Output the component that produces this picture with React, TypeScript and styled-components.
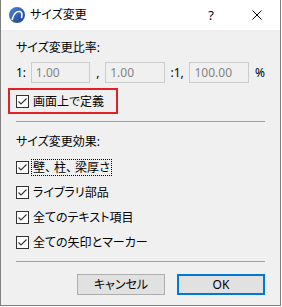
import React from "react";
import styled, { createGlobalStyle } from "styled-components";

const Global = createGlobalStyle`
  html, body { margin: 0; padding: 0; background: #ffffff; }
  body {
    font-family: "Noto Sans", "Noto Sans CJK JP", sans-serif;
    font-size: 12px;
    color: #000;
  }
`;

const Window = styled.div`
  width: 281px;
  height: 306px;
  box-sizing: border-box;
  border: 1px solid #7f7f7f;
  border-top: none;
  background: #f0f0f0;
  display: flex;
  flex-direction: column;
  font-feature-settings: "palt";
`;

const TitleBar = styled.div`
  height: 30px;
  background: #ffffff;
  display: flex;
  align-items: center;
  flex-shrink: 0;
`;

const AppIcon = styled.svg`
  margin-left: 8px;
  width: 16px;
  height: 16px;
`;

const Title = styled.span`
  margin-left: 5px;
  font-size: 12px;
  flex: 1;
  line-height: 16px;
`;

const TitleButton = styled.div`
  width: 46px;
  height: 30px;
  display: flex;
  align-items: center;
  justify-content: center;
  font-size: 13px;
  color: #000;
`;

const Body = styled.div`
  padding: 0 15px 10px 15px;
  display: flex;
  flex-direction: column;
  flex: 1;
`;

const GroupLabel = styled.div<{ $top: number }>`
  margin-top: ${(p) => p.$top}px;
  line-height: 16px;
  height: 16px;
  white-space: nowrap;
`;

const RatioRow = styled.div`
  margin-top: 6px;
  height: 21px;
  display: flex;
  align-items: center;
`;

const RowText = styled.span<{ $w: number }>`
  width: ${(p) => p.$w}px;
  text-align: center;
  line-height: 16px;
`;

const LeadText = styled.span`
  width: 15px;
  line-height: 16px;
`;

const Percent = styled.span`
  margin-left: 6px;
  line-height: 16px;
`;

const NumberBox = styled.div`
  width: 60px;
  height: 21px;
  box-sizing: border-box;
  border: 1px solid #cccccc;
  background: #f0f0f0;
  color: #838383;
  padding-left: 4px;
  display: flex;
  align-items: center;
`;

const Highlight = styled.div`
  margin-top: 5px;
  margin-left: -8px;
  align-self: flex-start;
  height: 26px;
  box-sizing: border-box;
  border: 2px solid #e3202a;
  padding: 0 10px 0 6px;
  display: flex;
  align-items: center;
`;

const Separator = styled.div<{ $top: number }>`
  margin-top: ${(p) => p.$top}px;
  height: 1px;
  background: #a0a0a0;
`;

const CheckList = styled.div`
  margin-top: 9px;
  display: flex;
  flex-direction: column;
  gap: 8px;
`;

const CheckRow = styled.div`
  height: 17px;
  display: flex;
  align-items: center;
`;

const Box = styled.span`
  width: 13px;
  height: 13px;
  box-sizing: border-box;
  border: 1px solid #333333;
  background: #ffffff;
  display: inline-flex;
  flex-shrink: 0;
`;

const CheckLabel = styled.span<{ $focus?: boolean }>`
  margin-left: 2px;
  padding: 0 1px;
  height: 17px;
  box-sizing: border-box;
  line-height: 15px;
  white-space: nowrap;
  border: 1px dotted ${(p) => (p.$focus ? "#000" : "transparent")};
`;

const FullWidth = styled.span`
  font-feature-settings: normal;
  letter-spacing: -3px;
`;

const ButtonRow = styled.div`
  margin-top: 12px;
  display: flex;
  justify-content: flex-end;
  gap: 12px;
`;

const Button = styled.div<{ $primary?: boolean }>`
  width: 88px;
  height: 21px;
  box-sizing: border-box;
  background: #e1e1e1;
  border: ${(p) => (p.$primary ? "2px solid #0078d7" : "1px solid #adadad")};
  display: flex;
  align-items: center;
  justify-content: center;
  line-height: 16px;
`;

const Check = () => (
  <Box>
    <svg width="11" height="11" viewBox="0 0 11 11">
      <path d="M1.5 5.5 L4 8 L9.5 2.5" fill="none" stroke="#333" strokeWidth="1.1" />
    </svg>
  </Box>
);

const CheckItem = ({ children, focus }: { children: React.ReactNode; focus?: boolean }) => (
  <CheckRow>
    <Check />
    <CheckLabel $focus={focus}>{children}</CheckLabel>
  </CheckRow>
);

export default function App() {
  return (
    <>
      <Global />
      <Window>
        <TitleBar>
          <AppIcon viewBox="0 0 16 16">
            <defs>
              <linearGradient id="g" x1="0" y1="0" x2="1" y2="1">
                <stop offset="0" stopColor="#4f86d8" />
                <stop offset="1" stopColor="#1a3f8c" />
              </linearGradient>
            </defs>
            <circle cx="8" cy="8" r="8" fill="url(#g)" />
            <path d="M3.2 12.5 C4.5 6.5 8 3.8 10.8 4.6 C12.8 5.2 13.2 8 12.6 10.5" fill="none" stroke="#fff" strokeWidth="1.6" strokeLinecap="round" />
          </AppIcon>
          <Title>サイズ変更</Title>
          <TitleButton>?</TitleButton>
          <TitleButton>
            <svg width="10" height="10" viewBox="0 0 10 10">
              <path d="M0.5 0.5 L9.5 9.5 M9.5 0.5 L0.5 9.5" stroke="#000" strokeWidth="1" />
            </svg>
          </TitleButton>
        </TitleBar>
        <Body>
          <GroupLabel $top={10}>サイズ変更比率:</GroupLabel>
          <RatioRow>
            <LeadText>1:</LeadText>
            <NumberBox>1.00</NumberBox>
            <RowText $w={15}>,</RowText>
            <NumberBox>1.00</NumberBox>
            <RowText $w={25}>:1,</RowText>
            <NumberBox>100.00</NumberBox>
            <Percent>%</Percent>
          </RatioRow>
          <Highlight>
            <Check />
            <CheckLabel>画面上で定義</CheckLabel>
          </Highlight>
          <Separator $top={7} />
          <GroupLabel $top={12}>サイズ変更効果:</GroupLabel>
          <CheckList>
            <CheckItem focus>
              壁<FullWidth>、</FullWidth>柱<FullWidth>、</FullWidth>梁厚さ
            </CheckItem>
            <CheckItem>ライブラリ部品</CheckItem>
            <CheckItem>全てのテキスト項目</CheckItem>
            <CheckItem>全ての矢印とマーカー</CheckItem>
          </CheckList>
          <Separator $top={10} />
          <ButtonRow>
            <Button>キャンセル</Button>
            <Button $primary>OK</Button>
          </ButtonRow>
        </Body>
      </Window>
    </>
  );
}
